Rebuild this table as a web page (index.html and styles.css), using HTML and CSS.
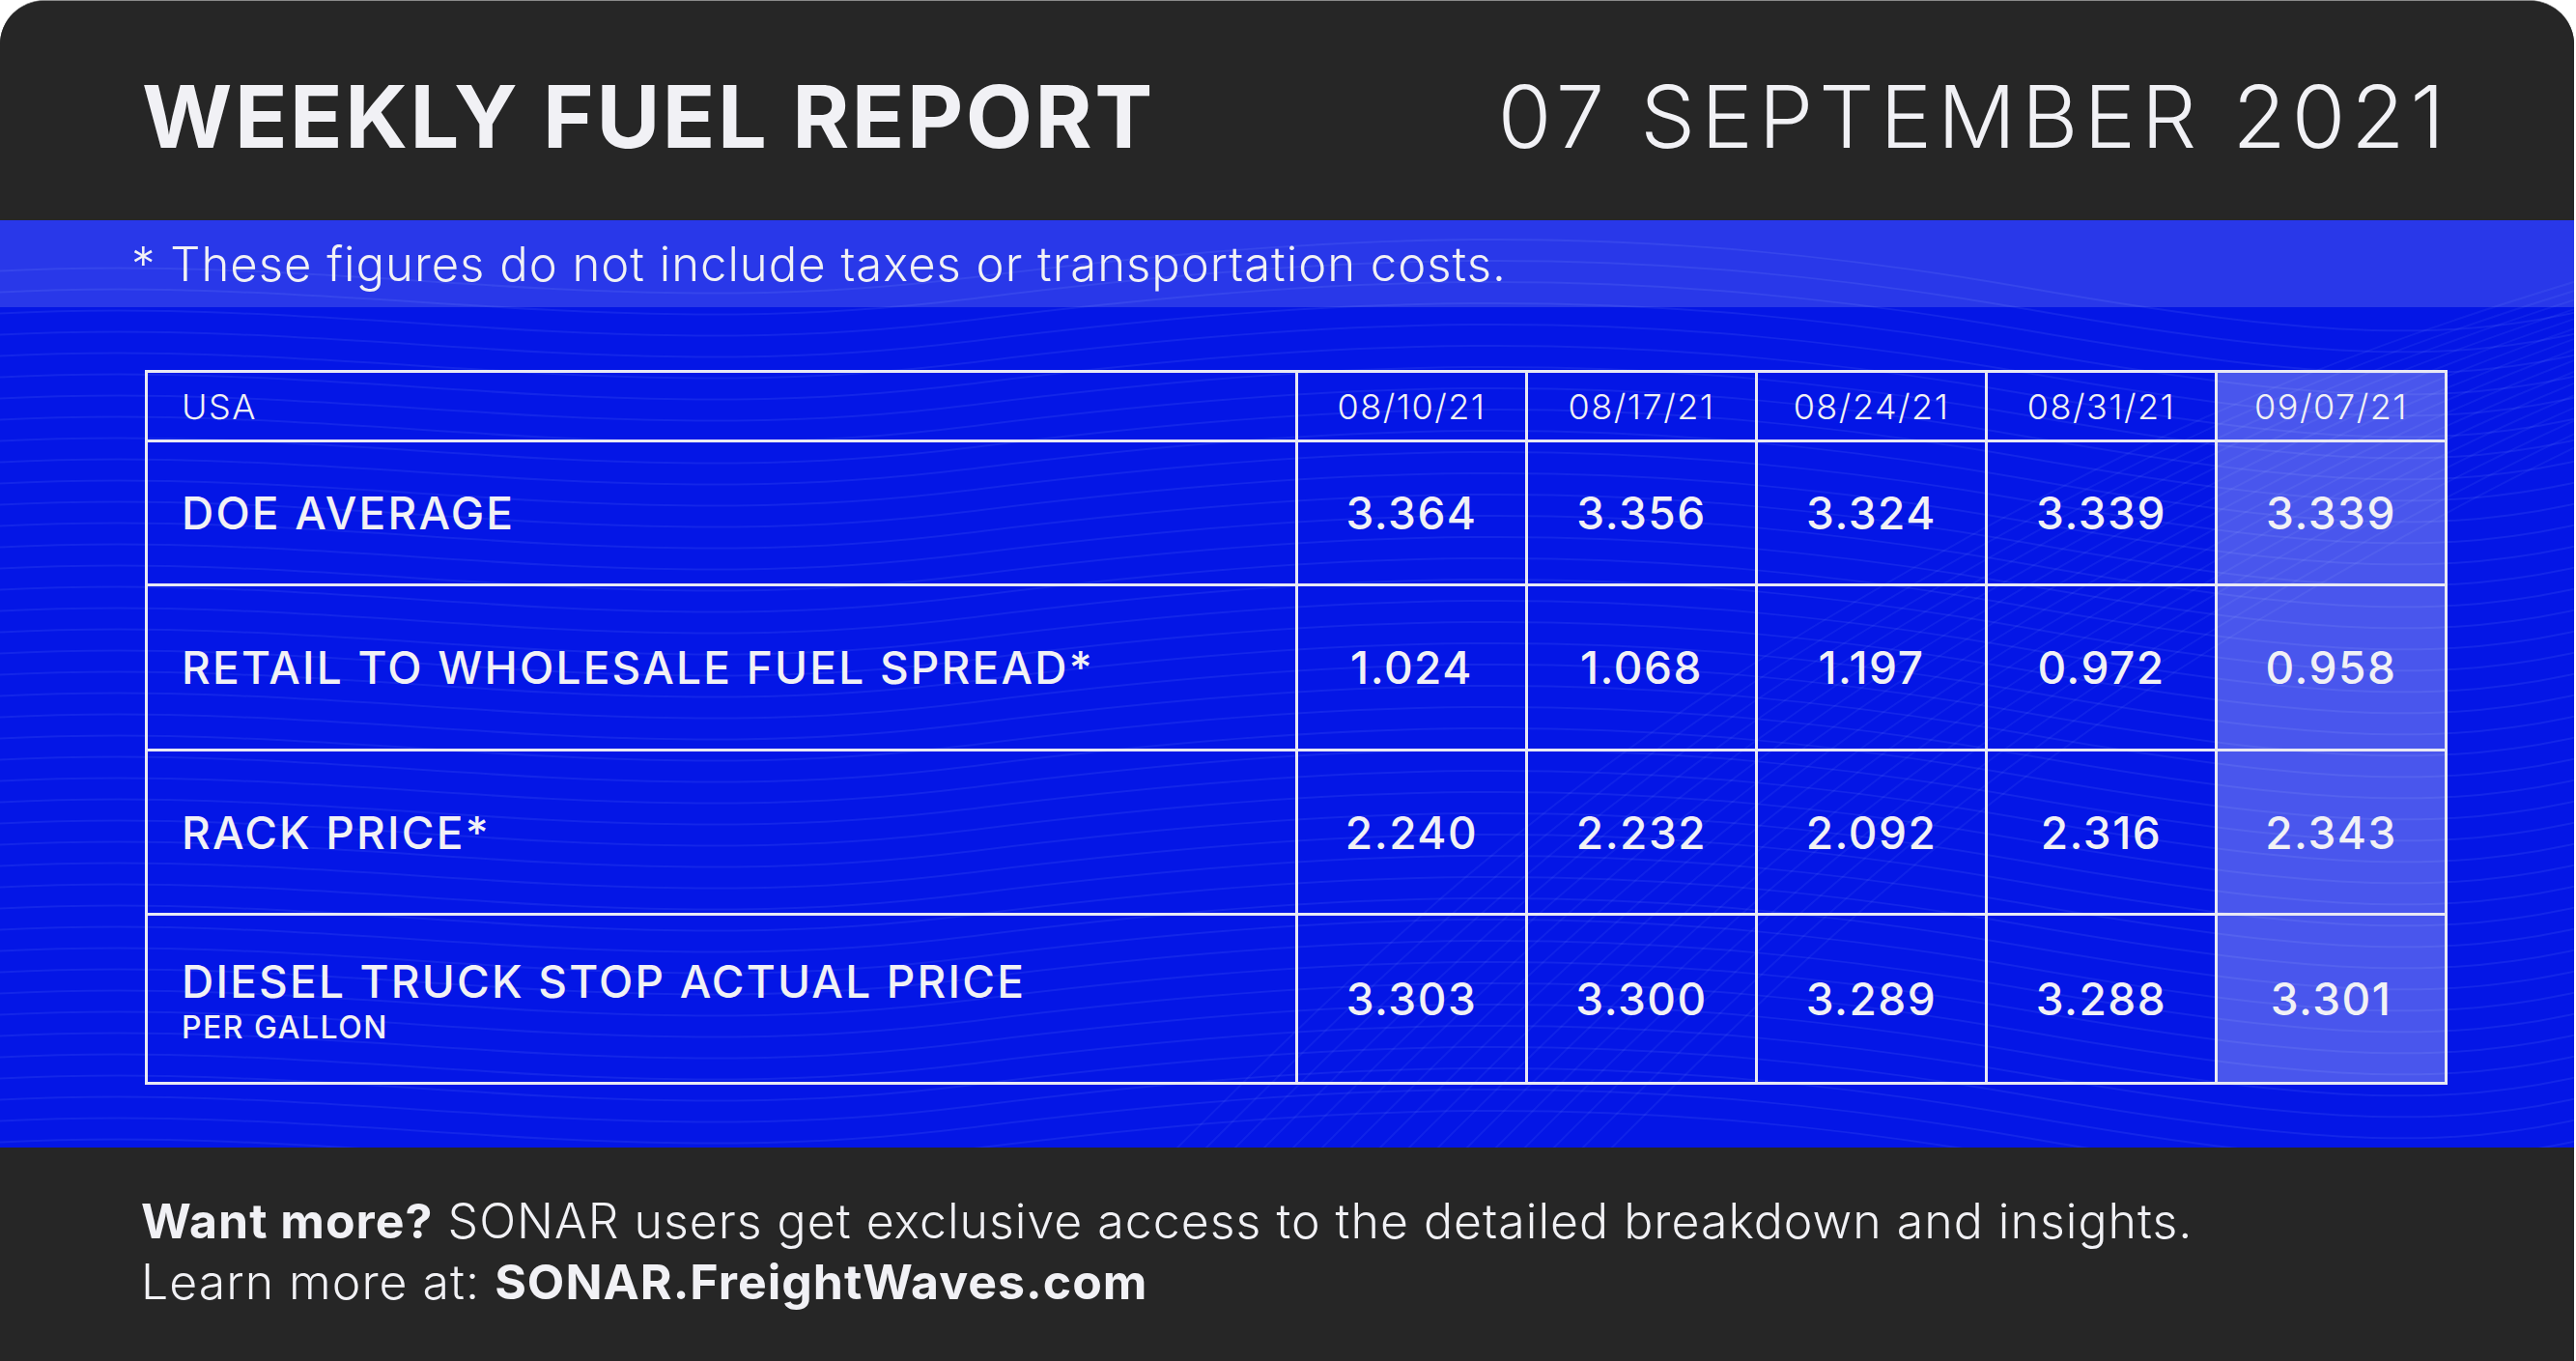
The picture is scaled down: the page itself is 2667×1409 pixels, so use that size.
FILE: index.html
```html
<!DOCTYPE html>
<html lang="en">
<head>
<meta charset="utf-8">
<title>Weekly Fuel Report</title>
<link rel="stylesheet" href="styles.css">
</head>
<body>
<div class="card">
  <header class="top">
    <h1 class="title">WEEKLY FUEL REPORT</h1>
    <div class="date">07 SEPTEMBER 2021</div>
  </header>
  <section class="blue">
    <svg class="waves" viewBox="0 0 2667 960" preserveAspectRatio="none" aria-hidden="true">
      <defs>
        <path id="wa" d="M-100 60 C 300 20, 600 110, 1000 60 S 1700 0, 2100 70 S 2600 120, 2800 60"/>
        <path id="wb" d="M1300 1000 C 1500 800, 1700 600, 2000 420 S 2500 150, 2800 60"/>
      </defs>
      <g class="wl">
        <use href="#wa" y="0"/><use href="#wa" y="22"/><use href="#wa" y="44"/><use href="#wa" y="66"/>
        <use href="#wa" y="88"/><use href="#wa" y="110"/><use href="#wa" y="132"/><use href="#wa" y="154"/>
        <use href="#wa" y="176"/><use href="#wa" y="198"/><use href="#wa" y="220"/><use href="#wa" y="242"/>
        <use href="#wa" y="264"/><use href="#wa" y="286"/><use href="#wa" y="308"/><use href="#wa" y="330"/>
        <use href="#wa" y="352"/><use href="#wa" y="374"/><use href="#wa" y="396"/><use href="#wa" y="418"/>
        <use href="#wa" y="440"/><use href="#wa" y="462"/><use href="#wa" y="484"/><use href="#wa" y="506"/>
        <use href="#wa" y="528"/><use href="#wa" y="550"/><use href="#wa" y="572"/><use href="#wa" y="594"/>
        <use href="#wa" y="616"/><use href="#wa" y="638"/><use href="#wa" y="660"/><use href="#wa" y="682"/>
        <use href="#wa" y="704"/><use href="#wa" y="726"/><use href="#wa" y="748"/><use href="#wa" y="770"/>
        <use href="#wa" y="792"/><use href="#wa" y="814"/><use href="#wa" y="836"/><use href="#wa" y="858"/>
        <use href="#wa" y="880"/><use href="#wa" y="902"/>
      </g>
      <g class="wl wd">
        <use href="#wb" x="0"/><use href="#wb" x="30"/><use href="#wb" x="60"/><use href="#wb" x="90"/>
        <use href="#wb" x="120"/><use href="#wb" x="150"/><use href="#wb" x="180"/><use href="#wb" x="210"/>
        <use href="#wb" x="240"/><use href="#wb" x="270"/><use href="#wb" x="300"/><use href="#wb" x="330"/>
        <use href="#wb" x="-30"/><use href="#wb" x="-60"/><use href="#wb" x="-90"/><use href="#wb" x="-120"/>
      </g>
    </svg>
    <div class="note">* These figures do not include taxes or transportation costs.</div>
    <div class="content">
      <table class="fuel">
        <colgroup>
          <col class="c-label">
          <col class="c-val"><col class="c-val"><col class="c-val"><col class="c-val"><col class="c-val">
        </colgroup>
        <thead>
          <tr class="r-head">
            <th class="lbl">USA</th>
            <th>08/10/21</th><th>08/17/21</th><th>08/24/21</th><th>08/31/21</th><th class="hl">09/07/21</th>
          </tr>
        </thead>
        <tbody>
          <tr class="r1">
            <td class="lbl">DOE AVERAGE</td>
            <td>3.364</td><td>3.356</td><td>3.324</td><td>3.339</td><td class="hl">3.339</td>
          </tr>
          <tr class="r2">
            <td class="lbl">RETAIL TO WHOLESALE FUEL SPREAD*</td>
            <td>1.024</td><td>1.068</td><td>1.197</td><td>0.972</td><td class="hl">0.958</td>
          </tr>
          <tr class="r3">
            <td class="lbl">RACK PRICE*</td>
            <td>2.240</td><td>2.232</td><td>2.092</td><td>2.316</td><td class="hl">2.343</td>
          </tr>
          <tr class="r4">
            <td class="lbl">DIESEL TRUCK STOP ACTUAL PRICE<span class="sub">PER GALLON</span></td>
            <td>3.303</td><td>3.300</td><td>3.289</td><td>3.288</td><td class="hl">3.301</td>
          </tr>
        </tbody>
      </table>
    </div>
  </section>
  <footer class="foot">
    <p><b>Want more?</b> SONAR users get exclusive access to the detailed breakdown and insights.</p>
    <p>Learn more at: <b>SONAR.FreightWaves.com</b></p>
  </footer>
</div>
</body>
</html>
```
FILE: styles.css
```css
* { box-sizing: border-box; }
html, body { margin: 0; padding: 0; }
body {
  background: #ffffff;
  font-family: Inter, "Noto Sans", sans-serif;
  color: #f1f1f5;
  width: 2667px;
  height: 1409px;
  overflow: hidden;
}
.card {
  width: 2665px;
  height: 1409px;
  border-top: 1px solid #8a8a8a;
  border-radius: 46px 46px 0 0;
  overflow: hidden;
  background: #262626;
  display: flex;
  flex-direction: column;
}
.top {
  height: 227px;
  flex: none;
  display: flex;
  align-items: center;
  justify-content: space-between;
  padding: 12px 128px 0 147px;
  background: #262626;
}
.title {
  margin: 0;
  font-size: 90px;
  font-weight: 700;
  letter-spacing: 2.5px;
  line-height: 1;
}
.date {
  font-size: 90px;
  font-weight: 300;
  letter-spacing: 6px;
  line-height: 1;
}
.blue {
  position: relative;
  height: 960px;
  flex: none;
  background: #0416e6;
  overflow: hidden;
}
.waves {
  position: absolute;
  left: 0;
  top: 0;
  width: 100%;
  height: 100%;
  z-index: 0;
}
.wl use {
  fill: none;
  stroke: rgba(120, 150, 255, 0.13);
  stroke-width: 2;
}
.wd use { stroke: rgba(120, 150, 255, 0.1); }
.note {
  position: relative;
  z-index: 1;
  height: 90px;
  display: flex;
  align-items: center;
  padding-left: 136px;
  background: rgba(255, 255, 255, 0.15);
  font-size: 49px;
  font-weight: 300;
  letter-spacing: 1px;
}
.content {
  position: relative;
  z-index: 1;
  padding: 65px 0 0 150px;
}
.fuel {
  border-collapse: collapse;
  table-layout: fixed;
  width: 2381px;
  border: 3px solid #e8e8f4;
}
.c-label { width: 1191px; }
.c-val { width: 238px; }
.fuel th, .fuel td {
  border: 3px solid #e8e8f4;
  text-align: center;
  padding: 0;
  vertical-align: middle;
  color: #f1f1f5;
}
.fuel th {
  font-size: 36px;
  font-weight: 300;
  letter-spacing: 1.5px;
}
.fuel td {
  font-size: 46px;
  font-weight: 500;
  letter-spacing: 1.5px;
}
.fuel .lbl {
  text-align: left;
  padding-left: 35px;
}
.fuel td.lbl { letter-spacing: 2.2px; }
.fuel .hl { background: rgba(255, 255, 255, 0.28); }
.r-head { height: 72px; }
.r1 { height: 149px; }
.r2 { height: 171px; }
.r3 { height: 170px; }
.r4 { height: 175px; }
.sub {
  display: block;
  font-size: 32px;
  line-height: 1;
  margin-top: 4px;
  letter-spacing: 1.5px;
}
.foot {
  flex: 1;
  display: flex;
  flex-direction: column;
  justify-content: center;
  padding: 0 0 6px 146px;
  background: #262626;
  font-size: 50px;
  font-weight: 300;
  letter-spacing: 1px;
}
.foot p {
  margin: 0;
  line-height: 63px;
}
.foot b { font-weight: 700; }
```
